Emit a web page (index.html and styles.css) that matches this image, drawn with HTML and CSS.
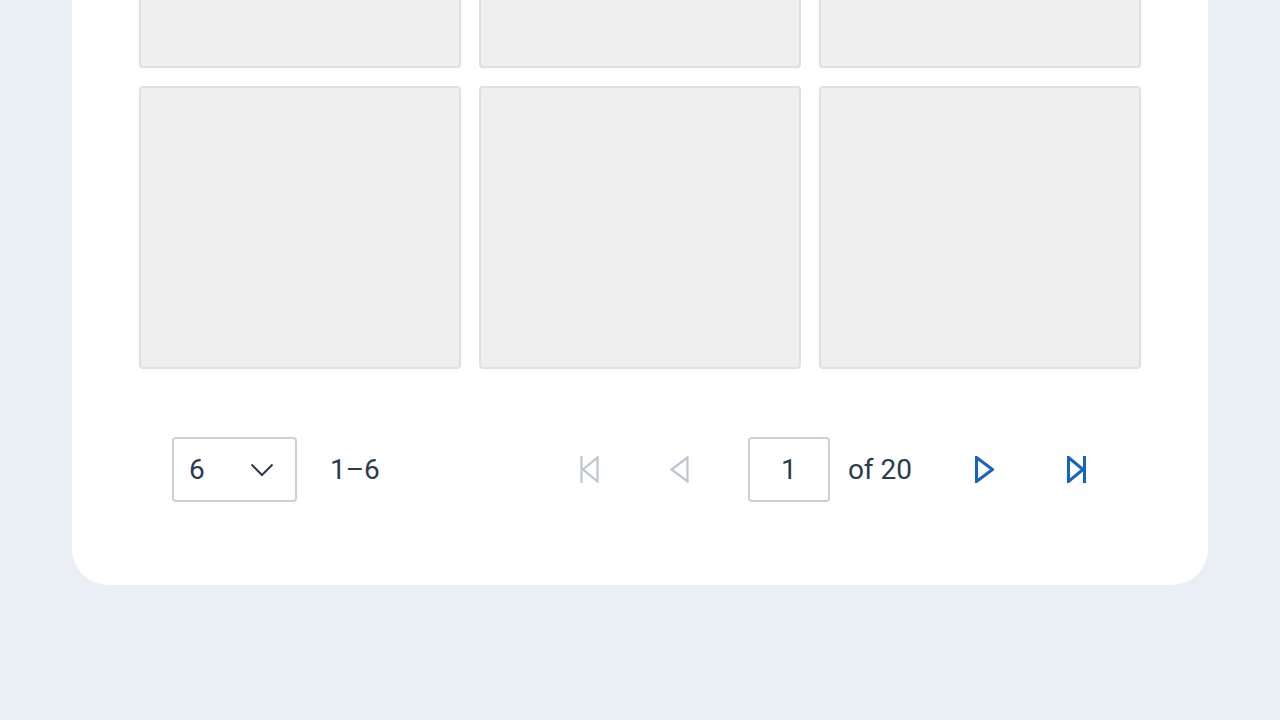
FILE: index.html
```html
<!DOCTYPE html>
<html>
<head>
    <link rel="stylesheet" href="styles.css">
</head>
<body>
    <div class="card">
        <div class="tile-grid">
            <div class="tile"></div>
            <div class="tile"></div>
            <div class="tile"></div>
            <div class="tile"></div>
            <div class="tile"></div>
            <div class="tile"></div>
        </div>

        <div class="pager">
            <div class="page-size">
                <span>6</span>
                <svg class="chevron" width="24" height="14" viewBox="0 0 24 14">
                    <polyline points="1.5,1.5 12,12 22.5,1.5" />
                </svg>
            </div>
            <span class="range">1–6</span>

            <div class="pager-nav">
                <div class="nav-group">
                    <button class="nav-btn" disabled>
                        <svg width="19" height="27" viewBox="0 0 19 27">
                            <line x1="1.5" y1="0" x2="1.5" y2="27" />
                            <polygon points="17.5,1.5 3,13.5 17.5,25.5" />
                        </svg>
                    </button>
                    <button class="nav-btn" disabled>
                        <svg width="19" height="27" viewBox="0 0 19 27">
                            <polygon points="17.5,1.5 1.5,13.5 17.5,25.5" />
                        </svg>
                    </button>
                </div>

                <div class="page-field">
                    <input type="text" value="1">
                    <span>of 20</span>
                </div>

                <div class="nav-group fwd">
                    <button class="nav-btn">
                        <svg width="19" height="27" viewBox="0 0 19 27">
                            <polygon points="1.5,1.5 17.5,13.5 1.5,25.5" />
                        </svg>
                    </button>
                    <button class="nav-btn">
                        <svg width="19" height="27" viewBox="0 0 19 27">
                            <polygon points="1.5,1.5 16,13.5 1.5,25.5" />
                            <line x1="17.5" y1="0" x2="17.5" y2="27" />
                        </svg>
                    </button>
                </div>
            </div>
        </div>
    </div>
</body>
</html>
```

FILE: styles.css
```css
body {
    margin: 0;
    background-color: #eaeff6;
    font-family: Roboto, "Liberation Sans", sans-serif;
    color: #2a3b4f;
}

.card {
    box-sizing: border-box;
    width: 1136px;
    margin: -282px auto 0;
    padding: 67px 67px 83px;
    background-color: #fff;
    border-radius: 36px;
}

.tile-grid {
    display: grid;
    grid-template-columns: repeat(3, 322px);
    grid-auto-rows: 283px;
    gap: 18px;
}

.tile {
    background-color: #efefef;
    border: 2px solid #e0e0e0;
    border-radius: 4px;
}

.pager {
    display: flex;
    align-items: center;
    margin: 68px 43px 0 33px;
    font-size: 28px;
}

.page-size {
    box-sizing: border-box;
    width: 125px;
    height: 65px;
    display: flex;
    align-items: center;
    justify-content: space-between;
    padding: 0 21px 0 15px;
    border: 2px solid #c9d1dc;
    border-radius: 4px;
}

.chevron polyline {
    fill: none;
    stroke: #2a3b4f;
    stroke-width: 2;
}

.range {
    margin-left: 33px;
}

.pager-nav {
    display: flex;
    align-items: center;
    gap: 46px;
    margin-left: auto;
}

.nav-group {
    display: flex;
    gap: 46px;
}

.nav-group.fwd {
    gap: 48px;
    margin-left: 4px;
}

.nav-btn {
    width: 44px;
    height: 44px;
    padding: 0;
    border: none;
    background: none;
    display: flex;
    align-items: center;
    justify-content: center;
    cursor: pointer;
}

.nav-btn svg * {
    fill: none;
    stroke: #1565c0;
    stroke-width: 3;
}

.nav-btn:disabled {
    cursor: default;
}

.nav-btn:disabled svg * {
    stroke: #bcc6d2;
    stroke-width: 2.2;
}

.page-field {
    display: flex;
    align-items: center;
    gap: 18px;
}

.page-field input {
    box-sizing: border-box;
    width: 82px;
    height: 65px;
    border: 2px solid #c9d1dc;
    border-radius: 4px;
    font-family: inherit;
    font-size: 28px;
    color: #2a3b4f;
    text-align: center;
    padding: 0;
    outline: none;
}
```
